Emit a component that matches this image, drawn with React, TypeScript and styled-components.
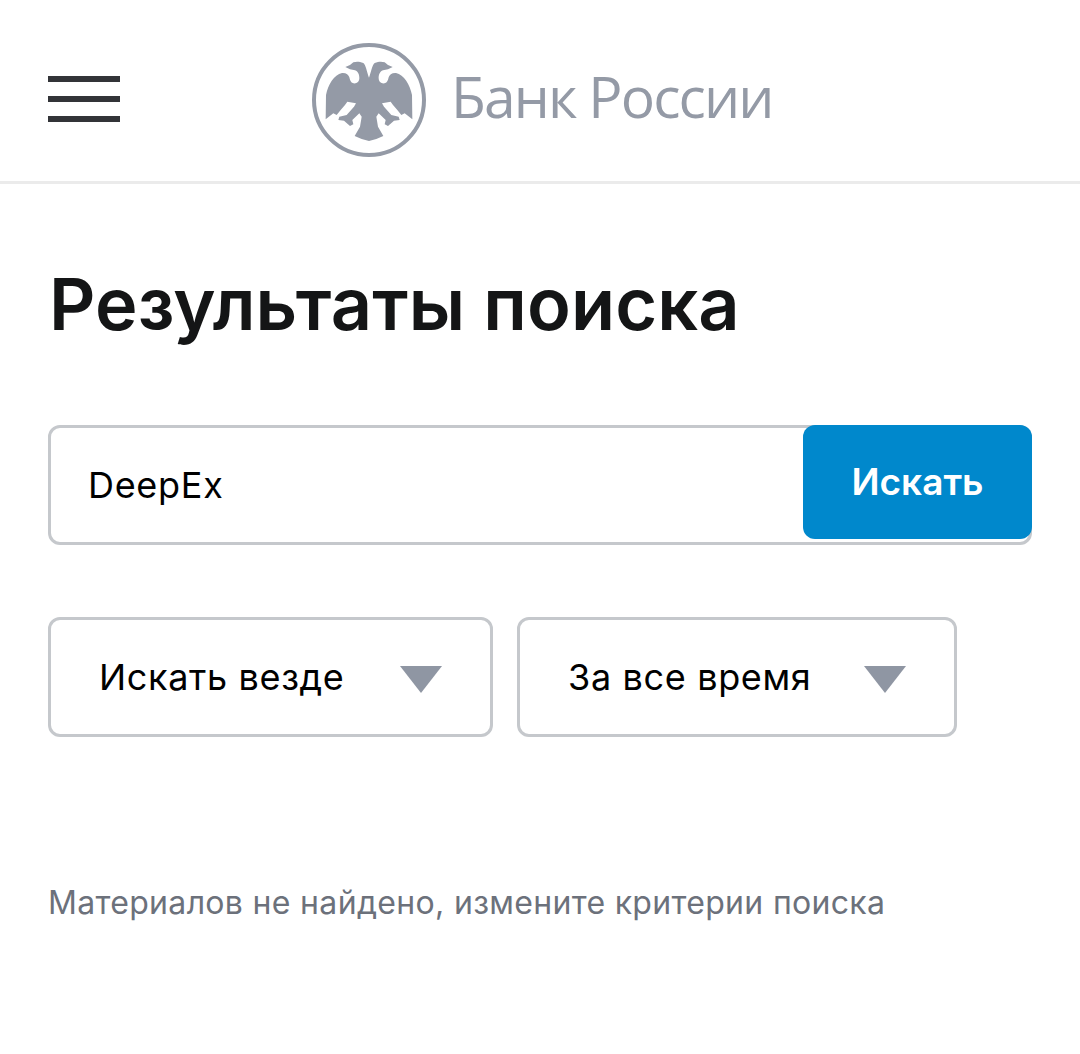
import React from 'react';
import styled, { createGlobalStyle } from 'styled-components';

const GlobalStyle = createGlobalStyle`
    html, body {
        margin: 0;
        padding: 0;
        background: #fff;
        font-family: Inter, "Noto Sans", sans-serif;
    }
`;

const Header = styled.header`
    height: 163px;
    padding: 18px 48px 0;
    border-bottom: 3px solid #ebebeb;
    display: flex;
    align-items: center;
`;

const Burger = styled.div`
    width: 72px;
    display: flex;
    flex-direction: column;
    gap: 14px;
    margin-top: -1px;
`;

const BurgerLine = styled.span`
    display: block;
    height: 6px;
    background: #323438;
`;

const Logo = styled.div`
    display: flex;
    align-items: center;
    margin-left: 192px;
    gap: 25px;
`;

const LogoTitle = styled.span`
    font-family: "Open Sans", "Noto Sans", sans-serif;
    font-size: 57px;
    font-weight: 400;
    letter-spacing: -1.9px;
    color: #949aa6;
    white-space: nowrap;
    margin-top: -8px;
`;

const Main = styled.main`
    padding: 0 48px;
`;

const Title = styled.h1`
    margin: 75px 0 0;
    font-size: 72px;
    line-height: 90px;
    font-weight: 600;
    letter-spacing: 0.1px;
    color: #141516;
    padding-left: 1px;
`;

const SearchBox = styled.div`
    margin-top: 76px;
    height: 120px;
    box-sizing: border-box;
    border: 3px solid #c5c8cc;
    border-radius: 12px;
    position: relative;
    display: flex;
    align-items: center;
    padding-left: 37px;
    font-size: 36px;
    letter-spacing: 0.7px;
    color: #000;
`;

const SearchButton = styled.button`
    position: absolute;
    top: -3px;
    right: -3px;
    width: 229px;
    height: 114px;
    border: 0;
    border-radius: 12px;
    background: #0088cc;
    color: #fff;
    font-family: inherit;
    font-size: 37px;
    font-weight: 600;
    padding: 0 0 2px;
`;

const Filters = styled.div`
    margin-top: 72px;
    display: flex;
    gap: 24px;
`;

const Select = styled.div<{ $width: number }>`
    width: ${props => props.$width}px;
    height: 120px;
    box-sizing: border-box;
    border: 3px solid #c5c8cc;
    border-radius: 12px;
    display: flex;
    align-items: center;
    justify-content: space-between;
    padding: 0 48px;
    font-size: 36px;
    letter-spacing: 0.65px;
    color: #000;
`;

const Arrow = styled.span`
    width: 0;
    height: 0;
    margin-top: 5px;
    border-left: 21px solid transparent;
    border-right: 21px solid transparent;
    border-top: 27px solid #8f96a3;
`;

const Empty = styled.p`
    margin: 146px 0 0;
    font-size: 32px;
    line-height: 40px;
    letter-spacing: 0.32px;
    color: #6c717b;
`;

const halfEagle =
    'M207 143 C201 128 198 106 190 99 C178 94 168 94 160 97 L150 105 L136 111 L150 118 L165 121 C175 125 178 135 178 145 C178 155 170 162 160 160 C152 158 150 150 148 142 C146 134 138 128 126 129 C102 134 84 165 78 195 L77 268 L100 250 L110 255 L122 240 L135 225 L142 215 L168 220 L162 230 L140 255 L118 260 L115 270 L132 272 L150 288 L160 283 L157 270 L178 250 L185 260 L180 290 L164 318 L185 327 L207 333 Z';

const EagleLogo = () => (
    <svg width="114" height="114" viewBox="36 39 342 342">
        <circle cx="207" cy="210" r="165" fill="none" stroke="#949aa6" strokeWidth="12" />
        <path d={halfEagle} fill="#949aa6" />
        <path d={halfEagle} fill="#949aa6" transform="matrix(-1 0 0 1 414 0)" />
    </svg>
);

const App = () => (
    <>
        <GlobalStyle />
        <Header>
            <Burger>
                <BurgerLine />
                <BurgerLine />
                <BurgerLine />
            </Burger>
            <Logo>
                <EagleLogo />
                <LogoTitle>Банк России</LogoTitle>
            </Logo>
        </Header>
        <Main>
            <Title>Результаты поиска</Title>
            <SearchBox>
                DeepEx
                <SearchButton>Искать</SearchButton>
            </SearchBox>
            <Filters>
                <Select $width={445}>
                    Искать везде
                    <Arrow />
                </Select>
                <Select $width={440}>
                    За все время
                    <Arrow />
                </Select>
            </Filters>
            <Empty>Материалов не найдено, измените критерии поиска</Empty>
        </Main>
    </>
);

export default App;
